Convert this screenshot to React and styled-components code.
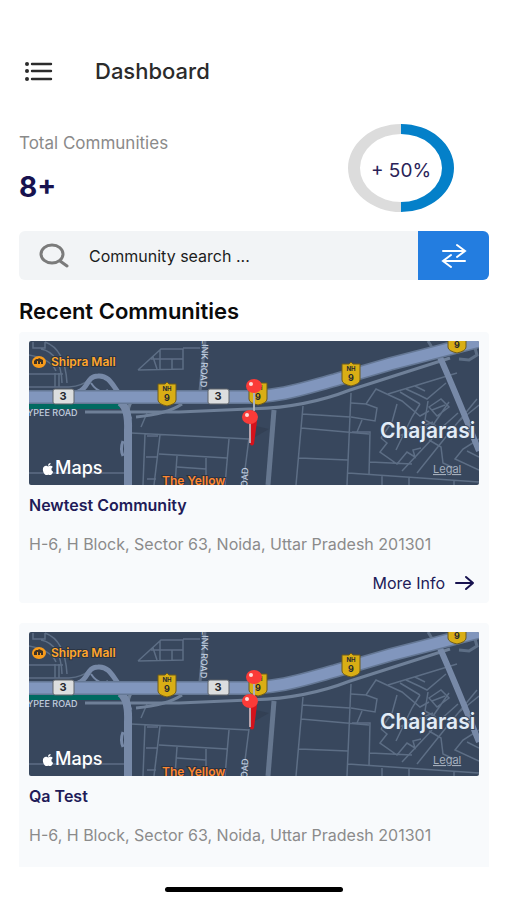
import React, { useState } from "react";
import styled, { createGlobalStyle } from "styled-components";
import { FaApple } from "react-icons/fa";

const communities = [
  {
    id: 1,
    name: "Newtest Community",
    address: "H-6, H Block, Sector 63, Noida, Uttar Pradesh 201301",
    pin: 76,
  },
  {
    id: 2,
    name: "Qa Test",
    address: "H-6, H Block, Sector 63, Noida, Uttar Pradesh 201301",
    pin: 69,
  },
];

const Shield = ({ x, y }) => (
  <g transform={`translate(${x} ${y})`}>
    <path
      d="M1 2 H8 L10 0 L12 2 H19 V18 Q19 22 10 24 Q1 22 1 18 Z"
      fill="#d9ae15"
      stroke="#6d5a1c"
    />
    <text x="10" y="9" className="sign" fontSize="6">
      NH
    </text>
    <text x="10" y="19" className="sign" fontSize="9">
      9
    </text>
  </g>
);

const Route = ({ x }) => (
  <g transform={`translate(${x} 48)`}>
    <rect width="21" height="15" rx="2" fill="#dcdedf" stroke="#5d6269" />
    <text x="10" y="11" className="sign" fontSize="11">
      3
    </text>
  </g>
);

const PinHead = ({ x, y }) => (
  <g>
    <ellipse cx={x} cy={y} rx="8" ry="7" fill="#fb3b38" />
    <circle cx={x - 3} cy={y - 2} r="2" fill="#ffdcd8" />
  </g>
);

const CommunityMap = ({ pin }) => (
  <MapSvg viewBox="0 0 450 144" preserveAspectRatio="xMidYMid slice">
    <rect width="450" height="144" fill="#38475d" />

    {/* side streets */}
    <g fill="none" stroke="#5d6e85" strokeWidth="1.5">
      <path d="M4 1 V7 H16 V1 M16 1 Q36 8 38 42 M12 8 Q32 12 33 42 M0 14 Q22 18 27 30 M0 46 H40 Q54 45 60 38 M26 32 V46 M30 32 V46 M0 33 H34" />
      <path d="M109 29 L132 8 H154 V28 L109 29 M131 9 V29 M122 18 H154 M143 18 V28 M154 7 H171 M124 16 L128 28" />
      <path d="M176 0 L171 50" strokeWidth="3" />
      <path d="M102 92 L220 98 M116 93 L114 144 M131 94 L125 144 M118 95 H129 M117 116 H129 M118 138 H127 M130 113 L198 117 M148 115 L146 144 M148 126 L177 128 M200 98 L196 144 M177 117 V144 M0 132 H95 M112 86 L118 72" />
      <path d="M220 97 L214 144 M274 65 L267 144 M322 52 L318 144 M273 73 L321 76 M272 87 L340 93 M270 117 L319 119 M319 132 L450 141 M353 134 V144 M380 136 V144 M425 139 V144" />
      <path d="M322 62 L337 63 L347 48 L373 60 L391 75 L400 70 M337 63 L348 67 L346 80 L322 76 M333 79 L328 91 M323 91 H341 L340 134 M341 121 L383 123 M352 97 L363 81 L368 63 M352 97 L358 102 L351 111 L368 123 L378 111 L386 116 L384 109 L392 107" />
      <path d="M359 53 L428 32 M371 51 L391 63 M377 48 L390 54 L398 58 L417 42 M391 63 L383 76 L367 109 M399 60 L396 79 L407 85 M386 45 L396 50 M400 66 L412 58 L420 66 L408 75 Z M403 69 L416 64 M392 88 L404 84 L420 61 M370 95 L404 81 M388 132 L416 97 L448 58 M373 130 L403 98 M400 99 L412 106 L414 122 L425 127 M450 98 L434 108 L426 118 L450 129 M438 110 L450 116 M429 81 L450 64 M410 89 L429 72" />
      <path d="M399 0 L407 13 M430 18 L440 19 L448 14 L446 7" strokeWidth="3" />
    </g>
    <path d="M245 69 L239 144" stroke="#66778f" strokeWidth="5" />

    {/* service road, ramps and highway */}
    <g fill="none" stroke="#6f8098">
      <path d="M56 71 H150 L220 68 Q275 67 321 49 L421 17" strokeWidth="3" />
      <path d="M107 76 Q138 73 153 63" strokeWidth="3" />
      <path d="M107 56 Q95 66 102 78" strokeWidth="3" />
    </g>
    <path d="M0 65 H91" stroke="#006a61" strokeWidth="6" />
    <g fill="none" stroke="#7789a7">
      <path d="M49 51 C60 48 57 35 69 35 C80 34 84 45 89 51" strokeWidth="5" />
      <path d="M62 42 Q70 54 79 49" strokeWidth="2" />
      <path d="M91 61 Q100 67 99 90 V144" strokeWidth="8" />
      <path d="M94 100 Q91 108 94 115" strokeWidth="3" />
      <path
        d="M97 15 M410 14 Q426 50 450 110"
        strokeWidth="6"
      />
    </g>
    <path
      d="M0 56 H215 C252 56 276 47 306 39 L361 23 L408 11 L450 0"
      fill="none"
      stroke="#657895"
      strokeWidth="14"
    />
    <path
      d="M0 56 H215 C252 56 276 47 306 39 L361 23 L408 11 L450 0"
      fill="none"
      stroke="#8196bd"
      strokeWidth="11"
    />

    <Route x={24} />
    <Route x={179} />
    <Shield x={128} y={41} />
    <Shield x={219} y={40} />
    <Shield x={312} y={21} />
    <Shield x={418} y={-12} />

    {/* places */}
    <ellipse cx="10" cy="21" rx="7" ry="6" fill="#f79b1b" />
    <path
      d="M5 23 V20 L7 18 H9 L10 17 L14 19 V23 H12 V21 H11 V23 H9 V20 H8 V23 Z"
      fill="#3f3223"
    />
    <text x="22" y="25" className="poi" fill="#ffa62b">
      Shipra Mall
    </text>
    <text x="133" y="144" className="poi" fill="#ff872f">
      The Yellow
    </text>
    <text x="-2" y="75" className="road">
      YPEE ROAD
    </text>
    <text transform="translate(173 -2) rotate(92)" className="road">
      LINK ROAD
    </text>
    <text transform="translate(218 152) rotate(-87)" className="road">
      ROAD
    </text>
    <text x="351" y="97" className="town">
      Chajarasi
    </text>

    {/* pins */}
    <path
      d={`M227 ${pin + 9} L240 ${pin + 12} L226 ${pin + 20} Z`}
      fill="#2d394b"
      opacity="0.5"
    />
    <path d="M225 48 V70" stroke="#a9b1bc" strokeWidth="2" />
    <PinHead x={225} y={45} />
    <path
      d={`M222 ${pin + 4} H228 L225 ${pin + 27} Q223 ${pin + 30} 221 ${pin + 27} Z`}
      fill="#d4121b"
    />
    <path d={`M221 ${pin + 4} V${pin + 26}`} stroke="#b9a4ac" strokeWidth="2" />
    <PinHead x={221} y={pin} />

    <FaApple x="12" y="121" size="14" color="#fff" />
    <text x="26" y="133" className="brand">
      Maps
    </text>
    <a href="#legal">
      <text x="404" y="132" className="legal">
        Legal
      </text>
    </a>
  </MapSvg>
);

const App = () => {
  const [search, setSearch] = useState("");

  return (
    <Page>
      <GlobalStyle />
      <Header>
        <MenuButton aria-label="Menu">
          <svg width="30" height="22" viewBox="0 0 30 22" fill="#2b2b2b">
            <circle cx="4" cy="4" r="2" />
            <circle cx="4" cy="11" r="2" />
            <circle cx="4" cy="19" r="2" />
            <path
              d="M9 4 H28 M9 11 H28 M9 19 H28"
              stroke="#2b2b2b"
              strokeWidth="2.4"
              strokeLinecap="round"
            />
          </svg>
        </MenuButton>
        <Title>Dashboard</Title>
      </Header>

      <Summary>
        <div>
          <Label>Total Communities</Label>
          <Count>8+</Count>
        </div>
        <Ring>
          <svg viewBox="0 0 106 88" fill="none">
            <path
              fill="#dcdcdc"
              d="M53 0 A53 44 0 0 0 53 88 V78 A41 34 0 0 1 53 10 Z"
            />
            <path
              fill="#0480c9"
              d="M53 0 A53 44 0 0 1 53 88 V78 A41 34 0 0 0 53 10 Z"
            />
          </svg>
          <span>+ 50%</span>
        </Ring>
      </Summary>

      <SearchBar>
        <SearchLabel htmlFor="search" aria-label="Community search">
          <svg width="30" height="26" viewBox="0 0 30 26" fill="none">
            <ellipse cx="13" cy="11" rx="11" ry="9" />
            <path d="M21 18 L28 23" />
          </svg>
        </SearchLabel>
        <SearchInput
          id="search"
          placeholder="Community search ..."
          value={search}
          onChange={(e) => setSearch(e.target.value)}
        />
        <SwapButton aria-label="Swap">
          <svg width="26" height="26" viewBox="0 0 26 26" fill="none">
            <path d="M2 8 H24 M16 2 L24 8 L16 14 M24 18 H2 M10 12 L2 18 L10 24" />
          </svg>
        </SwapButton>
      </SearchBar>

      <Heading>Recent Communities</Heading>

      <List>
        {communities.map((item) => (
          <Card key={item.id}>
            <CommunityMap pin={item.pin} />
            <CardTitle>{item.name}</CardTitle>
            <Address>{item.address}</Address>
            <MoreLink href={`#community-${item.id}`}>
              More Info
              <svg width="20" height="18" viewBox="0 0 20 18" fill="none">
                <path d="M1 9 H18 M11 3 L18 9 L11 15" />
              </svg>
            </MoreLink>
          </Card>
        ))}
      </List>

      <Footer>
        <HomeBar />
      </Footer>
    </Page>
  );
};

export default App;

const GlobalStyle = createGlobalStyle`
  * {
    box-sizing: border-box;
    margin: 0;
  }
  body {
    background: #fff;
    font-family: Inter, "Liberation Sans", sans-serif;
  }
  button {
    padding: 0;
    border: 0;
    background: none;
    cursor: pointer;
  }
`;

const Page = styled.main`
  display: flex;
  flex-direction: column;
  height: 100vh;
  padding: 56px 18px 0 19px;
`;

const Header = styled.header`
  display: flex;
  align-items: center;
  gap: 42px;
  height: 30px;
  padding-left: 4px;
`;

const MenuButton = styled.button`
  display: flex;
`;

const Title = styled.h1`
  font-size: 22px;
  font-weight: 500;
  color: #2b2b2b;
`;

const Summary = styled.section`
  display: flex;
  justify-content: space-between;
  padding: 38px 35px 19px 0;
`;

const Label = styled.p`
  margin-top: 8px;
  font-size: 17px;
  line-height: 22px;
  color: #8a8a8a;
`;

const Count = styled.p`
  margin-top: 17px;
  font-size: 28px;
  line-height: 32px;
  font-weight: 700;
  color: #17124f;
`;

const Ring = styled.div`
  display: grid;
  place-items: center;
  width: 106px;
  height: 88px;

  svg,
  span {
    grid-area: 1 / 1;
  }
  span {
    padding-top: 4px;
    font-size: 19px;
    color: #2a2358;
  }
`;

const SearchBar = styled.div`
  display: flex;
  flex-shrink: 0;
  height: 49px;
  border-radius: 6px;
  overflow: hidden;
  background: #f2f4f6;
`;

const SearchLabel = styled.label`
  display: flex;
  align-items: center;
  padding: 0 20px;

  path,
  ellipse {
    stroke: #7b7b7b;
    stroke-width: 3;
    stroke-linecap: round;
  }
`;

const SearchInput = styled.input`
  flex: 1;
  min-width: 0;
  padding: 0;
  border: 0;
  outline: 0;
  background: none;
  font-family: inherit;
  font-size: 16px;
  color: #1c1c1c;

  &::placeholder {
    color: #1c1c1c;
    opacity: 1;
  }
`;

const SwapButton = styled.button`
  display: flex;
  align-items: center;
  justify-content: center;
  width: 71px;
  && {
    background: #237de0;
  }

  path {
    stroke: #fff;
    stroke-width: 2;
    stroke-linecap: round;
  }
`;

const Heading = styled.h2`
  padding: 17px 0 7px;
  font-size: 22px;
  line-height: 28px;
  font-weight: 600;
  color: #0b0b0b;
`;

const List = styled.section`
  flex: 1;
  min-height: 0;
  display: flex;
  flex-direction: column;
  gap: 20px;
  overflow-y: auto;
  scrollbar-width: none;
`;

const Card = styled.article`
  display: flex;
  flex-direction: column;
  flex-shrink: 0;
  padding: 9px 10px 9px;
  border-radius: 4px;
  background: #f8fafc;
`;

const MapSvg = styled.svg`
  display: block;
  width: 100%;
  border-radius: 2px;

  .sign {
    font-weight: 700;
    fill: #252a30;
    text-anchor: middle;
  }
  .poi {
    font-size: 12px;
    font-weight: 600;
    stroke: #2b3443;
    stroke-width: 2px;
    paint-order: stroke;
  }
  .road {
    font-size: 9px;
    font-weight: 500;
    fill: #c0cddf;
  }
  .town {
    font-size: 21px;
    font-weight: 600;
    fill: #e2ecf7;
    stroke: #38475d;
    stroke-width: 2px;
    paint-order: stroke;
  }
  .brand {
    font-size: 18px;
    font-weight: 500;
    fill: #fff;
  }
  .legal {
    font-size: 11px;
    fill: #a5afbd;
    text-decoration: underline;
  }
`;

const CardTitle = styled.h3`
  margin-top: 9px;
  font-size: 16px;
  line-height: 22px;
  font-weight: 600;
  color: #211b58;
`;

const Address = styled.p`
  margin-top: 17px;
  font-size: 16px;
  line-height: 22px;
  color: #8b8b8b;
`;

const MoreLink = styled.a`
  display: flex;
  align-items: center;
  align-self: flex-end;
  gap: 10px;
  margin: 17px 4px 0 0;
  font-size: 16px;
  line-height: 22px;
  color: #211b58;
  text-decoration: none;

  path {
    stroke: #17124f;
    stroke-width: 2;
    stroke-linecap: round;
    stroke-linejoin: round;
  }
`;

const Footer = styled.footer`
  display: flex;
  justify-content: center;
  align-items: center;
  flex-shrink: 0;
  height: 33px;
  padding-top: 11px;
`;

const HomeBar = styled.div`
  width: 38%;
  height: 5px;
  border-radius: 3px;
  background: #000;
`;
